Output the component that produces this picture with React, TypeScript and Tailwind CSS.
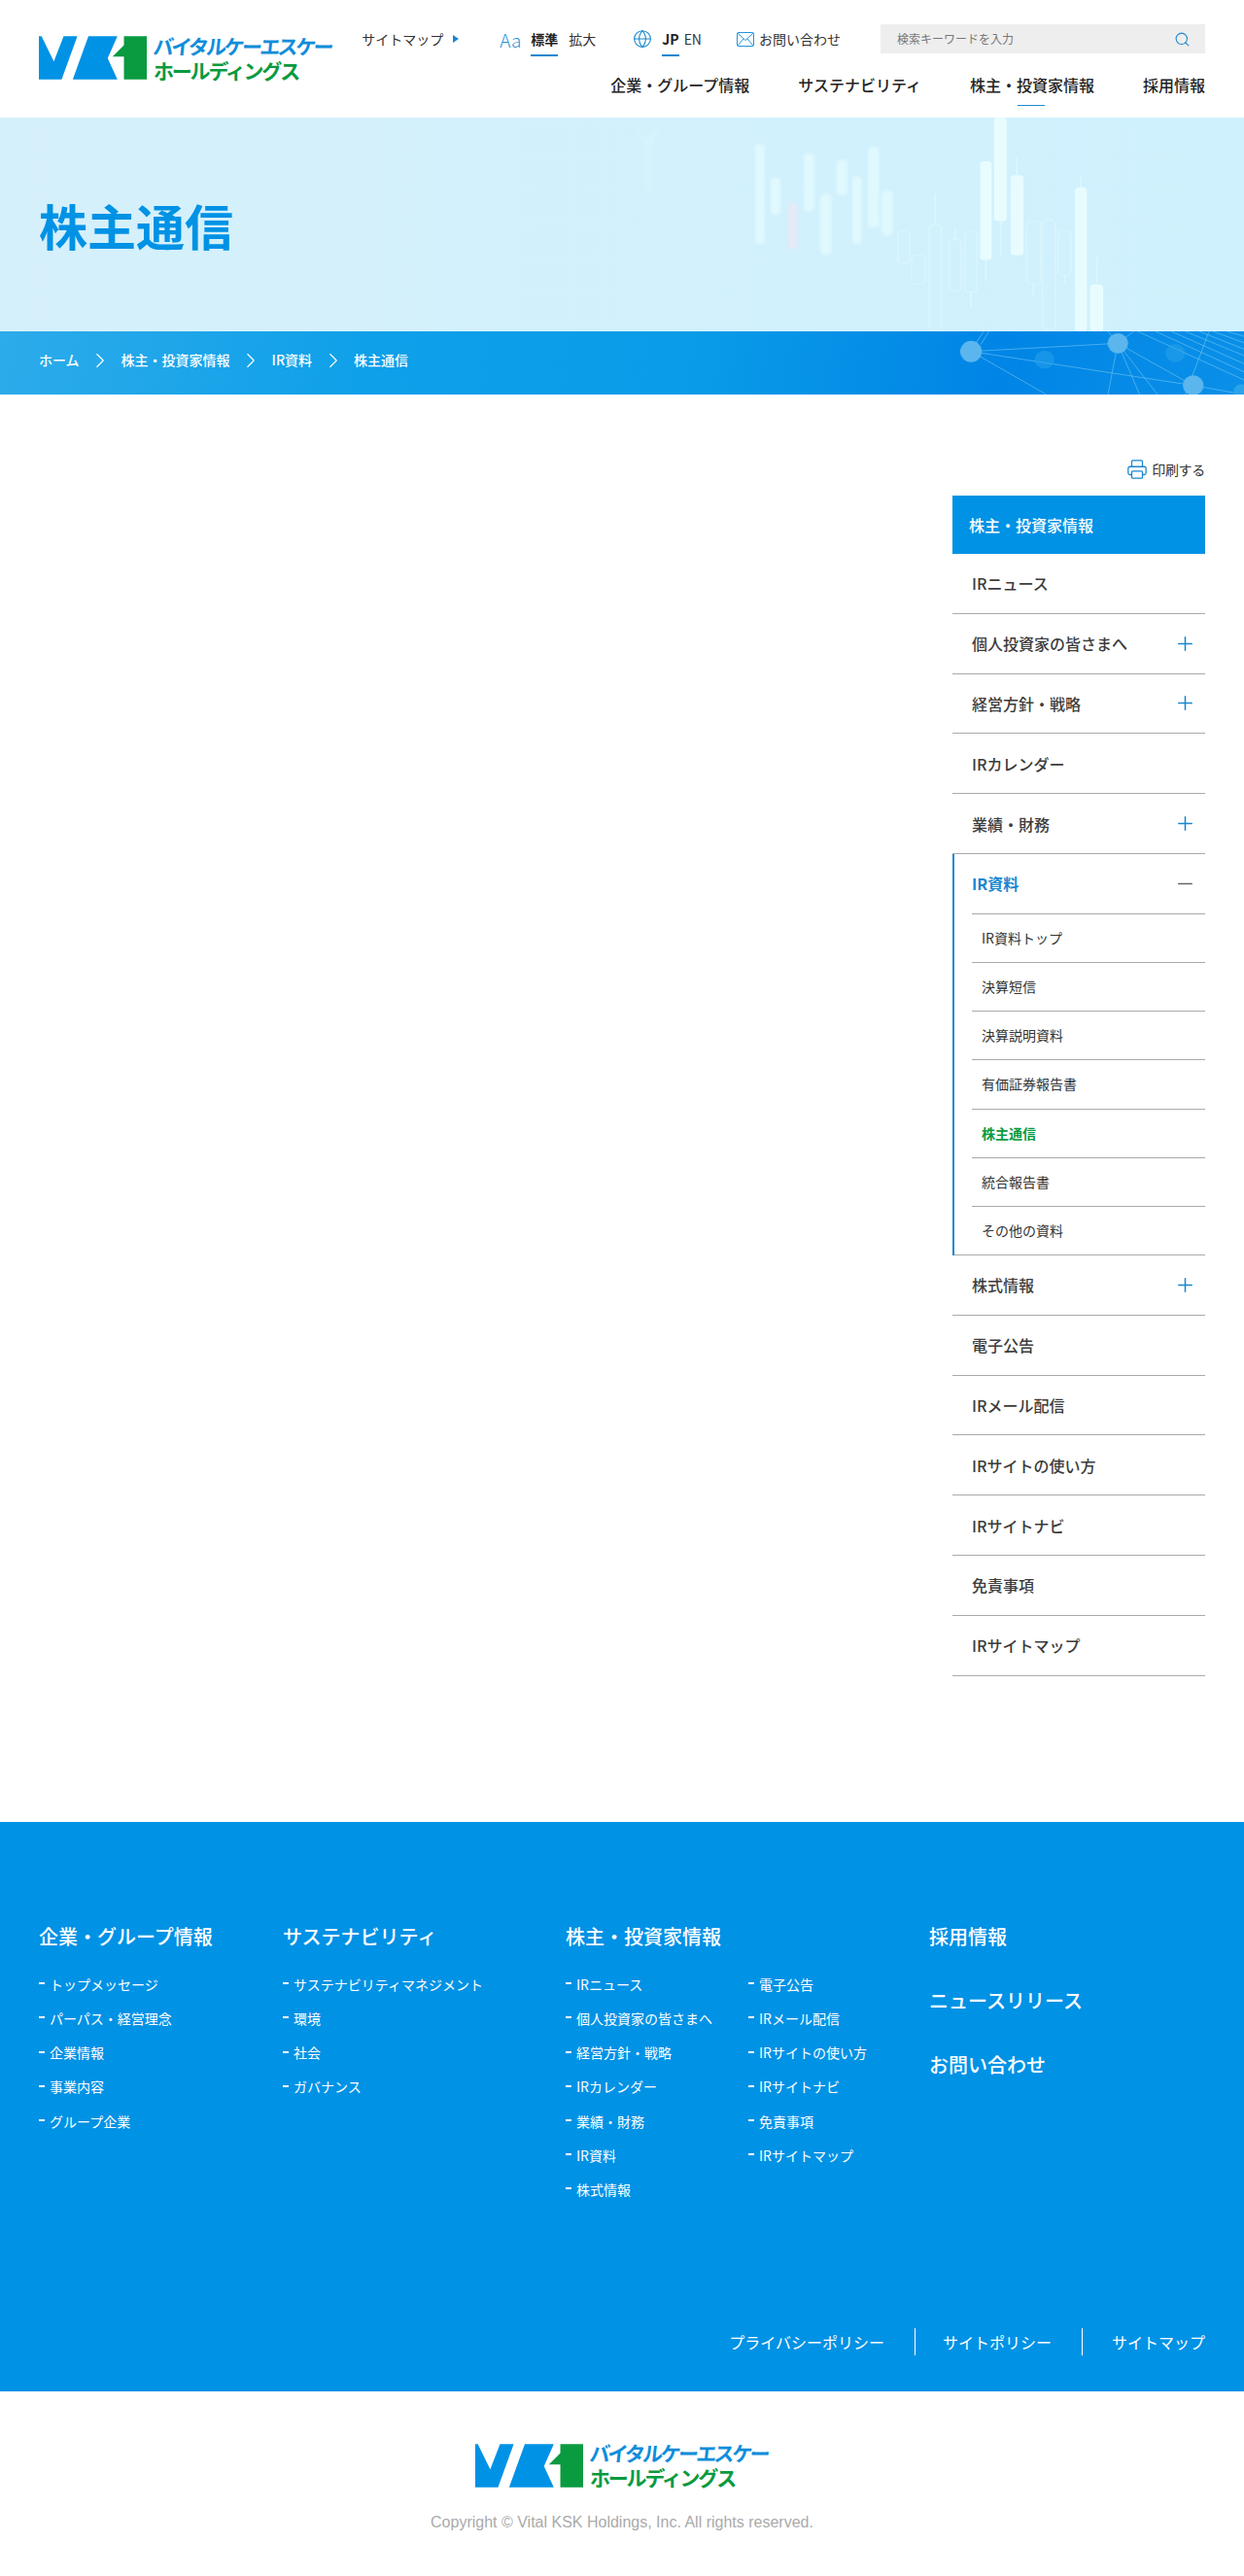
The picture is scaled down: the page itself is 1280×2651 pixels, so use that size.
import { Globe, Printer, Search, ChevronRight, Plus, Minus } from 'lucide-react'

const sideItems = [
  { label: 'IRニュース' },
  { label: '個人投資家の皆さまへ', open: true },
  { label: '経営方針・戦略', open: true },
  { label: 'IRカレンダー' },
  { label: '業績・財務', open: true },
]
const sideItemsAfter = [
  { label: '株式情報', open: true },
  { label: '電子公告' },
  { label: 'IRメール配信' },
  { label: 'IRサイトの使い方' },
  { label: 'IRサイトナビ' },
  { label: '免責事項' },
  { label: 'IRサイトマップ' },
]
const subItems = ['IR資料トップ', '決算短信', '決算説明資料', '有価証券報告書', '株主通信', '統合報告書', 'その他の資料']

const softBars = [
  [335, 80, 25, 310], [375, 185, 25, 115], [458, 110, 27, 180], [500, 235, 28, 190], [540, 130, 28, 110],
  [580, 180, 25, 210], [620, 90, 28, 250], [655, 225, 28, 140],
]
const brightBars = [
  [903, 135, 29, 305], [938, 0, 32, 320], [980, 178, 32, 247], [1142, 215, 30, 445], [1180, 515, 33, 145],
]
const wicks = [
  [917, 440, 505], [955, 320, 430], [995, 125, 178], [1157, 178, 215], [1197, 430, 515], [1116, 488, 515], [1037, 515, 555],
  [880, 540, 585], [840, 340, 375], [790, 235, 330],
]
const outlineBars = [
  [1020, 320, 35, 195], [1060, 315, 32, 340], [1100, 350, 32, 138], [825, 375, 30, 160], [865, 350, 30, 190],
  [775, 330, 30, 330], [730, 425, 35, 90], [695, 350, 30, 100],
]

function Logo() {
  return (
    <div className="flex items-center gap-[7px] h-[45px]">
      <svg width="111" height="45" viewBox="0 0 331 133" className="shrink-0">
        <path d="M0 0H8L46 78L76 0H118L70 133H0Z" fill="#0092e5" />
        <path d="M152 0H241L211 68L241 133H104Z" fill="#0092e5" />
        <path d="M261 0H331V133H261V63H226L261 28Z" fill="#0a9a40" />
      </svg>
      <div className="flex flex-col w-[184px]">
        <span className="text-[21px] leading-[25px] h-[25px] font-bold tracking-[-2.6px] whitespace-nowrap text-[#0f8ddb] -skew-x-6">バイタルケーエスケー</span>
        <span className="text-[21px] leading-[25px] h-[25px] font-bold tracking-[-2.2px] whitespace-nowrap text-[#0a9a40]">ホールディングス</span>
      </div>
    </div>
  )
}

function FooterLink({ label }: { label: string }) {
  return (
    <li className="flex items-center h-[35.2px] text-[14px] text-white whitespace-nowrap">
      <span className="w-[6px] h-[2px] bg-white mr-[5px] -translate-y-[1px]" />
      {label}
    </li>
  )
}

function SideRow({ label, open }: { label: string; open?: boolean }) {
  return (
    <div className="flex items-center justify-between h-[61.8px] pl-[20px] pr-[9px] border-b border-[#aaaaaa] text-[16px] font-medium text-[#3c3c3c]">
      <span>{label}</span>
      {open && <Plus size={23} strokeWidth={1.6} className="text-[#1a87cf]" />}
    </div>
  )
}

export default function App() {
  return (
    <div className="w-[1280px] bg-white font-['Noto_Sans_CJK_JP','Noto_Sans','Liberation_Sans',sans-serif] text-[#222222]">
      {/* header */}
      <header className="flex justify-between h-[121px] px-[40px]">
        <div className="pt-[37px]"><Logo /></div>
        <div className="flex flex-col items-end pt-[25px]">
          <div className="flex items-center h-[30px] text-[14px]">
            <span className="text-[#333333]">サイトマップ</span>
            <span className="ml-[10px] w-0 h-0 border-y-[4px] border-y-transparent border-l-[6px] border-l-[#1a87cf]" />
            <span className="ml-[42px] text-[19px] font-light leading-none text-[#1f95dc]">Aa</span>
            <span className="relative ml-[10px] font-bold">
              標準
              <span className="absolute left-0 right-0 top-[26px] h-[2px] bg-[#1a87cf]" />
            </span>
            <span className="ml-[11px] text-[#333333]">拡大</span>
            <Globe size={20} strokeWidth={1.3} className="ml-[38px] text-[#1a87cf]" />
            <span className="relative ml-[10px] font-bold">
              JP
              <span className="absolute left-0 right-0 top-[26px] h-[2px] bg-[#1a87cf]" />
            </span>
            <span className="ml-[5px] text-[#333333]">EN</span>
            <svg width="18" height="15" viewBox="0 0 18 15" fill="none" stroke="#1f95dc" strokeWidth="1" className="ml-[36px]">
              <rect x="0.5" y="0.5" width="17" height="14" rx="1" />
              <path d="M1 1L9 8.5L17 1M1 14L7 7M17 14L11 7" />
            </svg>
            <span className="ml-[5px] text-[#333333]">お問い合わせ</span>
            <div className="flex items-center justify-between ml-[41px] w-[334px] h-[30px] bg-[#eeeeee] pl-[17px] pr-[15px]">
              <span className="text-[12px] text-[#777777]">検索キーワードを入力</span>
              <Search size={17} strokeWidth={1.5} className="text-[#1a87cf]" />
            </div>
          </div>
          <nav className="flex items-center gap-[50px] mt-[20px] text-[16px] font-medium text-[#222222]">
            <span>企業・グループ情報</span>
            <span>サステナビリティ</span>
            <span className="relative">
              株主・投資家情報
              <span className="absolute left-[49px] w-[28px] top-[33px] h-[1px] bg-[#1a87cf]" />
            </span>
            <span>採用情報</span>
          </nav>
        </div>
      </header>

      {/* title */}
      <section className="relative h-[220px] overflow-hidden bg-gradient-to-r from-[#d5f0fb] to-[#cff1fd] px-[40px] flex items-center">
        <svg className="absolute right-0 top-0" width="640" height="220" viewBox="0 0 1568 660" preserveAspectRatio="none">
          <g className="blur-[4px]" opacity="0.7">
            <path d="M10 0 L60 60 L110 0 L80 90 L80 230 L55 230 L55 90Z" fill="#e2fbff" opacity="0.3" />
            {softBars.map(([x, y, w, h]) => (
              <rect key={x} x={x} y={y} width={w} height={h} rx="12" fill="#e6fcff" />
            ))}
            <rect x="420" y="265" width="20" height="140" rx="8" fill="#f1e6f2" />
          </g>
          <g opacity="0.6">
            {outlineBars.map(([x, y, w, h]) => (
              <rect key={x} x={x} y={y} width={w} height={h} rx="12" fill="none" stroke="#e0f8ff" strokeWidth="4" />
            ))}
            {wicks.map(([x, y1, y2]) => (
              <line key={x} x1={x} x2={x} y1={y1} y2={y2} stroke="#e6fbff" strokeWidth="4" />
            ))}
          </g>
          {brightBars.map(([x, y, w, h]) => (
            <rect key={x} x={x} y={y} width={w} height={h} rx="10" fill="#e8fcff" />
          ))}
        </svg>
        <h1 className="relative text-[50px] leading-none font-bold text-[#0092e5]">株主通信</h1>
      </section>

      {/* breadcrumb */}
      <div className="relative h-[65px] overflow-hidden bg-[linear-gradient(100deg,#2dabea_0%,#0ea0e9_30%,#0a9ce8_55%,#0085e6_80%,#0a90e8_100%)] px-[40px] pb-[6px] flex items-center text-[14px] font-medium text-white">
        <svg className="absolute right-0 top-0" width="640" height="65" viewBox="0 0 1568 195" preserveAspectRatio="none">
          <g stroke="#7ccdf5" strokeWidth="2" fill="none" opacity="0.75">
            <path d="M880 62L1250 37M880 62L1440 167M880 62L1070 195M890 40L912 0M905 40L925 0" />
            <path d="M1250 37L1225 195M1250 37L1305 195M1250 37L1350 195M1250 37L1440 167M1250 37L1290 0M1250 37L1225 0" />
            <path d="M1440 167L1568 195M1480 0L1420 195" />
            <path d="M1300 0L1568 150M1345 0L1568 125M1385 0L1568 100M1420 0L1568 75M1455 0L1568 55M1490 0L1568 35M1525 0L1568 15" />
          </g>
          <ellipse cx="1065" cy="87" rx="25" ry="28" fill="#2ba3ea" opacity="0.5" />
          <ellipse cx="1395" cy="67" rx="25" ry="28" fill="#2ba3ea" opacity="0.5" />
          <ellipse cx="880" cy="62" rx="27" ry="33" fill="#5cb6ee" />
          <ellipse cx="1250" cy="37" rx="26" ry="31" fill="#5cb6ee" />
          <ellipse cx="1440" cy="167" rx="26" ry="31" fill="#5cb6ee" />
          <ellipse cx="1560" cy="185" rx="18" ry="22" fill="#2ba3ea" />
        </svg>
        <nav className="relative flex items-center">
          <span>ホーム</span>
          <ChevronRight size={26} strokeWidth={1} className="mx-[8.5px]" />
          <span>株主・投資家情報</span>
          <ChevronRight size={26} strokeWidth={1} className="mx-[8.5px]" />
          <span>IR資料</span>
          <ChevronRight size={26} strokeWidth={1} className="mx-[8.5px]" />
          <span>株主通信</span>
        </nav>
      </div>

      {/* main */}
      <main className="flex justify-end px-[40px] pb-[150px]">
        <aside className="w-[260px]">
          <div className="flex items-end justify-end gap-[4px] h-[104px] pb-[16px] text-[14px] text-[#333333]">
            <Printer size={22} strokeWidth={1.4} className="text-[#1a87cf]" />
            <span className="tracking-[-0.3px]">印刷する</span>
          </div>
          <div className="flex items-center h-[60px] pl-[17px] bg-[#0092e5] text-[16px] font-medium text-white">株主・投資家情報</div>
          {sideItems.map(item => <SideRow key={item.label} {...item} />)}
          <div className="border-l-[2px] border-[#1a87cf]">
            <div className="flex items-center justify-between h-[61.8px] ml-[18px] pr-[9px] border-b border-[#aaaaaa] text-[16px] font-bold text-[#1a87cf]">
              <span>IR資料</span>
              <Minus size={23} strokeWidth={1.6} className="text-[#666666]" />
            </div>
            {subItems.map(s => (
              <div key={s} className={`flex items-center h-[50.2px] ml-[18px] pl-[10px] border-b border-[#aaaaaa] text-[14px] last:ml-0 last:pl-[28px] ${s === '株主通信' ? 'font-bold text-[#0a9a40]' : 'font-normal text-[#333333]'}`}>
                {s}
              </div>
            ))}
          </div>
          {sideItemsAfter.map(item => <SideRow key={item.label} {...item} />)}
        </aside>
      </main>

      {/* footer */}
      <footer className="bg-[#0092e5] h-[586px] px-[40px] pt-[104px] text-white">
        <div className="flex h-[417px]">
          <div className="w-[251px]">
            <p className="text-[20px] leading-[28px] font-medium">企業・グループ情報</p>
            <ul className="mt-[18px]">
              {['トップメッセージ', 'パーパス・経営理念', '企業情報', '事業内容', 'グループ企業'].map(l => <FooterLink key={l} label={l} />)}
            </ul>
          </div>
          <div className="w-[291px]">
            <p className="text-[20px] leading-[28px] font-medium">サステナビリティ</p>
            <ul className="mt-[18px]">
              {['サステナビリティマネジメント', '環境', '社会', 'ガバナンス'].map(l => <FooterLink key={l} label={l} />)}
            </ul>
          </div>
          <div className="w-[374px]">
            <p className="text-[20px] leading-[28px] font-medium">株主・投資家情報</p>
            <div className="flex mt-[18px]">
              <ul className="w-[188px]">
                {['IRニュース', '個人投資家の皆さまへ', '経営方針・戦略', 'IRカレンダー', '業績・財務', 'IR資料', '株式情報'].map(l => <FooterLink key={l} label={l} />)}
              </ul>
              <ul>
                {['電子公告', 'IRメール配信', 'IRサイトの使い方', 'IRサイトナビ', '免責事項', 'IRサイトマップ'].map(l => <FooterLink key={l} label={l} />)}
              </ul>
            </div>
          </div>
          <div className="flex flex-col gap-[38px] text-[20px] leading-[28px] font-medium">
            <p>採用情報</p>
            <p>ニュースリリース</p>
            <p>お問い合わせ</p>
          </div>
        </div>
        <div className="flex justify-end items-center h-[28px] text-[16px]">
          <span>プライバシーポリシー</span>
          <span className="w-px h-[28px] bg-white ml-[31px] mr-[28px]" />
          <span>サイトポリシー</span>
          <span className="w-px h-[28px] bg-white ml-[31px] mr-[30px]" />
          <span>サイトマップ</span>
        </div>
      </footer>

      <div className="flex flex-col items-center h-[190px] pt-[54px]">
        <Logo />
        <p className="mt-[24px] font-['Liberation_Sans',sans-serif] text-[16px] text-[#aaaaaa]">Copyright © Vital KSK Holdings, Inc. All rights reserved.</p>
      </div>
    </div>
  )
}
